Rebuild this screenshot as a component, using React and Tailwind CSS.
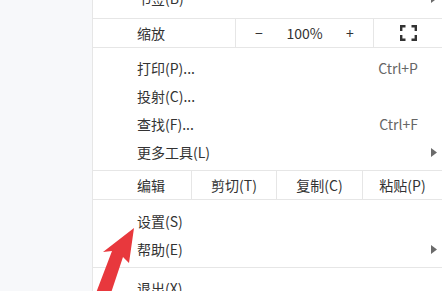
import React from "react";

const font = { fontFamily: '"Noto Sans CJK SC", "Noto Sans", sans-serif' };

function Arrow() {
  return (
    <svg width="6" height="9" viewBox="0 0 6 9" className="block">
      <polygon points="0,0 6,4.5 0,9" fill="#6b6b6b" />
    </svg>
  );
}

function Item({ label, shortcut, sub }) {
  return (
    <div className="flex h-[28px] items-center pl-[44px]">
      <span className="flex-1 text-[14px] text-[#333]">{label}</span>
      {shortcut && <span className="text-[14px] text-[#666]">{shortcut}</span>}
      <span className="flex w-[24px] justify-end pr-[5px]">{sub && <Arrow />}</span>
    </div>
  );
}

function FullIcon() {
  return (
    <svg width="17" height="16" viewBox="0 0 17 16" fill="none" stroke="#333" strokeWidth="2.4">
      <path d="M1.2 6V1.2H5.5" />
      <path d="M11.5 1.2H15.8V6" />
      <path d="M15.8 10V14.8H11.5" />
      <path d="M5.5 14.8H1.2V10" />
    </svg>
  );
}

export default function App() {
  return (
    <div className="flex h-[291px] w-[442px] overflow-hidden bg-white" style={font}>
      <div className="w-[93px] shrink-0 border-r border-[#e6e6e6] bg-[#f7f8fa]" />
      <div className="relative flex-1 bg-white">
        <div className="-mt-[16px]">
          <Item label="书签(B)" sub />
        </div>
        <div className="mt-[6px] flex h-[30px] border-y border-[#e6e6e6] text-[14px] text-[#333]">
          <div className="flex w-[143px] items-center border-r border-[#e6e6e6] pl-[44px]">缩放</div>
          <div className="flex w-[138px] items-center border-r border-[#e6e6e6]">
            <span className="w-[46px] text-center">−</span>
            <span className="flex-1 text-center">100%</span>
            <span className="w-[46px] text-center">+</span>
          </div>
          <div className="flex flex-1 items-center justify-center">
            <FullIcon />
          </div>
        </div>
        <div className="pb-[4px] pt-[6px]">
          <Item label="打印(P)..." shortcut="Ctrl+P" />
          <Item label="投射(C)..." />
          <Item label="查找(F)..." shortcut="Ctrl+F" />
          <Item label="更多工具(L)" sub />
        </div>
        <div className="flex h-[30px] border-y border-[#e6e6e6] text-[14px] text-[#333]">
          <div className="flex w-[99px] items-center border-r border-[#e6e6e6] pl-[44px]">编辑</div>
          <div className="flex w-[85px] items-center justify-center border-r border-[#e6e6e6]">剪切(T)</div>
          <div className="flex w-[86px] items-center justify-center border-r border-[#e6e6e6]">复制(C)</div>
          <div className="flex flex-1 items-center justify-center">粘贴(P)</div>
        </div>
        <div className="border-b border-[#e6e6e6] pb-[4px] pt-[7px]">
          <Item label="设置(S)" />
          <Item label="帮助(E)" sub />
        </div>
        <div className="pt-[6px]">
          <Item label="退出(X)" />
        </div>
      </div>
      <svg className="pointer-events-none absolute left-0 top-0" width="442" height="291">
        <polygon
          points="134,228 129,263 123,257 111,293 96,293 112,251 103,252"
          fill="#e8383d"
        />
      </svg>
    </div>
  );
}
